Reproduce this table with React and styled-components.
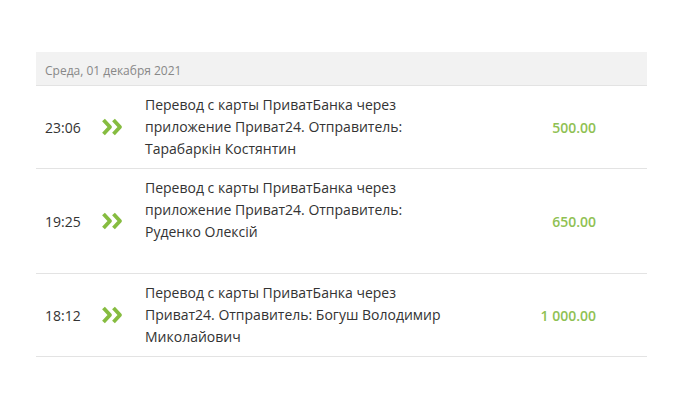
import React from 'react';
import styled, { createGlobalStyle } from 'styled-components';

const GlobalStyle = createGlobalStyle`
  body {
    margin: 0;
    background: #fff;
    font-family: "Open Sans", "Liberation Sans", sans-serif;
    color: #333;
  }
`;

const Page = styled.div`
  padding: 52px 43px 0 36px;
`;

const List = styled.div`
  width: 611px;
`;

const DayHeader = styled.div`
  height: 34px;
  box-sizing: border-box;
  display: flex;
  align-items: center;
  padding: 4px 0 0 9px;
  background: #f2f2f2;
  border-bottom: 1px solid #e3e3e3;
  font-size: 12px;
  color: #888;
`;

const Row = styled.div`
  display: grid;
  grid-template-columns: 56px 44px 300px 1fr;
  align-items: center;
  padding: 8px 51px 8px 9px;
  border-bottom: 1px solid #e3e3e3;
`;

const Time = styled.div`
  font-size: 14px;
`;

const Icon = styled.div`
  display: flex;
  align-items: center;
`;

const Description = styled.div`
  font-size: 14px;
  line-height: 22px;
  min-height: ${(p) => p.$lines * 22}px;
`;

const Amount = styled.div`
  font-size: 14px;
  font-weight: 600;
  color: #8fc153;
  text-align: right;
`;

const Arrows = () => (
  <svg width="22" height="18" viewBox="0 0 22 18">
    <path
      d="M2.5 2 L9 9 L2.5 16 M12.5 2 L19 9 L12.5 16"
      fill="none"
      stroke="#86bc40"
      strokeWidth="3.8"
      strokeLinejoin="round"
    />
  </svg>
);

const rows = [
  { time: '23:06', text: 'Перевод с карты ПриватБанка через приложение Приват24. Отправитель: Тарабаркін Костянтин', amount: '500.00', lines: 3 },
  { time: '19:25', text: 'Перевод с карты ПриватБанка через приложение Приват24. Отправитель: Руденко Олексій', amount: '650.00', lines: 4 },
  { time: '18:12', text: 'Перевод с карты ПриватБанка через Приват24. Отправитель: Богуш Володимир Миколайович', amount: '1 000.00', lines: 3 },
];

export default function App() {
  return (
    <Page>
      <GlobalStyle />
      <List>
        <DayHeader>Среда, 01 декабря 2021</DayHeader>
        {rows.map((r) => (
          <Row key={r.time}>
            <Time>{r.time}</Time>
            <Icon><Arrows /></Icon>
            <Description $lines={r.lines}>{r.text}</Description>
            <Amount>{r.amount}</Amount>
          </Row>
        ))}
      </List>
    </Page>
  );
}
